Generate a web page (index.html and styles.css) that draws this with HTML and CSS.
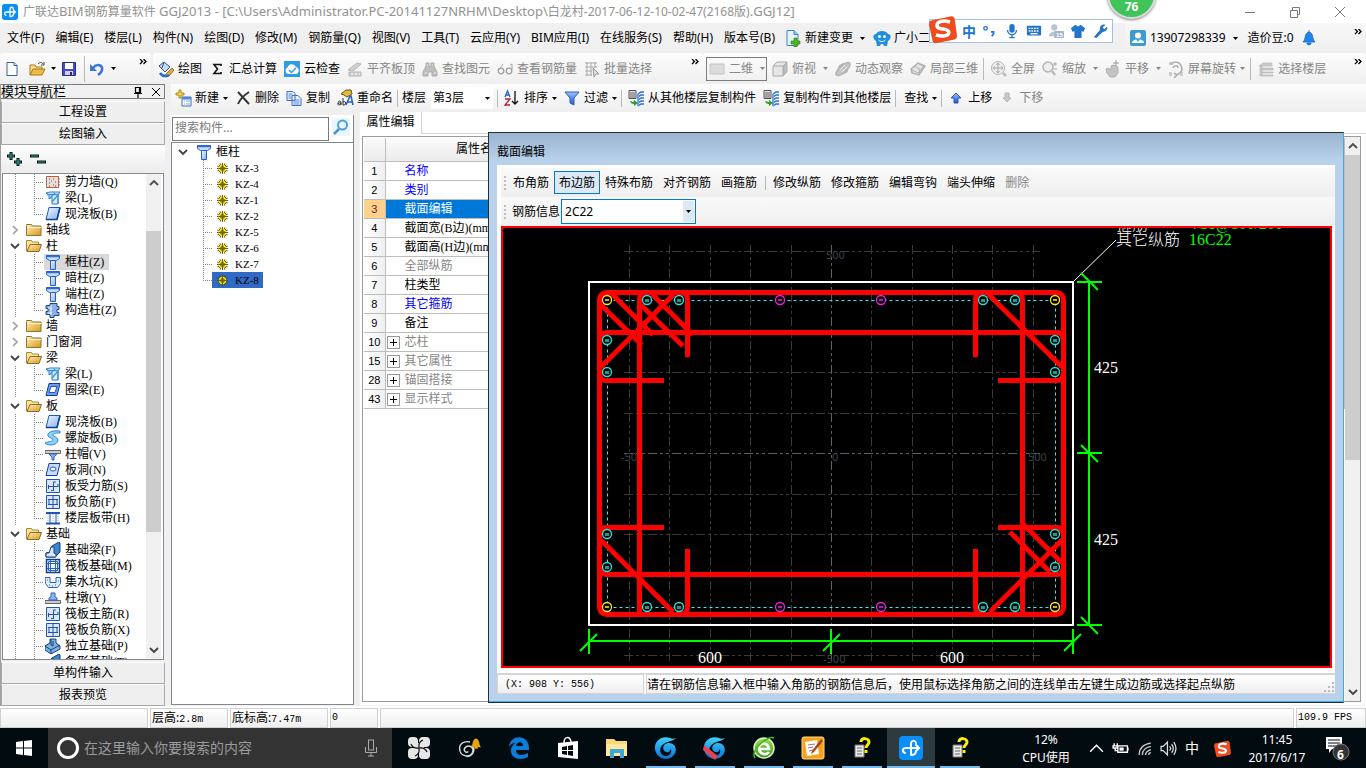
FILE: index.html
```html
<!DOCTYPE html>
<html lang="zh-CN">
<head>
<meta charset="utf-8">
<title>广联达BIM钢筋算量软件 GGJ2013</title>
<link rel="stylesheet" href="styles.css">
</head>
<body>
<svg class="defs" aria-hidden="true">
  <defs>
    <linearGradient id="gBlue" x1="0" y1="0" x2="1" y2="1"><stop offset="0" stop-color="#f4f9ff"/><stop offset="1" stop-color="#7fb2ee"/></linearGradient>
    <linearGradient id="gFold" x1="0" y1="0" x2="1" y2="1"><stop offset="0" stop-color="#fff2b8"/><stop offset="1" stop-color="#d9971c"/></linearGradient>
    <linearGradient id="gArr" x1="0" y1="0" x2="0" y2="1"><stop offset="0" stop-color="#9cc0fb"/><stop offset="1" stop-color="#2455c8"/></linearGradient>
    <linearGradient id="gSky" x1="0" y1="0" x2="0" y2="1"><stop offset="0" stop-color="#3fd0fb"/><stop offset="1" stop-color="#0b72d8"/></linearGradient>
    <linearGradient id="gGreen" x1="0" y1="0" x2="0" y2="1"><stop offset="0" stop-color="#9fe04a"/><stop offset="1" stop-color="#2f9a1c"/></linearGradient>
  </defs>
  <symbol id="app" viewBox="0 0 24 24"><rect width="24" height="24" rx="4" fill="#0a8ffa"/><path d="M12 19V8c0-4 4-4 5-1M20 12H7c-4 0-4 4-1 5M17 9l3 3-3 3M12 19c4 0 5-2 5-4" fill="none" stroke="#fff" stroke-width="2" stroke-linecap="round"/></symbol>
  <symbol id="caret" viewBox="0 0 5 3"><path d="M0 0h5L2.500 3z" fill="currentColor"/></symbol>
  <symbol id="more" viewBox="0 0 8 6"><path d="M1 0l2.500 2.500L1 5M4.500 0 7 2.500 4.500 5" fill="none" stroke="#000" stroke-width="1.300"/></symbol>
  <symbol id="newdoc" viewBox="0 0 18 18"><path d="M4 2.500h7l3 3v10H4z" fill="#fff" stroke="#41618f"/><path d="M11 2.500v3h3" fill="#cfe0f7" stroke="#41618f"/></symbol>
  <symbol id="opend" viewBox="0 0 18 18"><path d="M2 15V5h5l1 2h6v2" fill="#fbe08b" stroke="#a57b1a"/><path d="m2 15 3-6h12l-3 6z" fill="#f0bb45" stroke="#a57b1a"/><path d="M10 4c2-2 4-2 5 0m1-2v3h-3" fill="none" stroke="#444"/></symbol>
  <symbol id="save" viewBox="0 0 18 18"><path d="M2.500 2.500h13v13h-13z" fill="#4a4ac4" stroke="#2a2a8c"/><path d="M5 3h8v6H5z" fill="#fff"/><path d="M5 11h8v4H5z" fill="#cfd2e8"/><path d="M10 12h2v3h-2z" fill="#333"/></symbol>
  <symbol id="undo" viewBox="0 0 18 18"><path d="M5 8c4-5 10-3 9 2-.5 3-3 4-4 5" fill="none" stroke="#3d74d8" stroke-width="2.600"/><path d="M2 4v7h7z" fill="#3d74d8"/></symbol>
  <symbol id="draw" viewBox="0 0 18 18"><path d="m2 6 5-4 6 5-5 5z" fill="#c5dbf5" stroke="#35537c"/><path d="M7 2 5 8" stroke="#35537c"/><path d="m9 14 6-6 2 2-5 6-4 1z" fill="#e5ab35" stroke="#6b4c13" stroke-width=".7"/><path d="M3 13c2 3 5 4 9 2" stroke="#2c6dd2" stroke-width="2.500" fill="none"/></symbol>
  <symbol id="sum" viewBox="0 0 18 18"><path d="M13 6V4.500H6L9.500 9 6 13.500h7V12" fill="none" stroke="#111" stroke-width="1.600"/></symbol>
  <symbol id="cloud" viewBox="0 0 18 18"><path d="M1 1h16v16H1z" fill="#2b9ee6"/><path d="M5 14a3.500 3.500 0 0 1-.5-6.500A4.500 4.500 0 0 1 13 7a3.600 3.600 0 0 1 0 7z" fill="#fff"/><path d="m6 10 2.500 2.500L13 8" stroke="#2b9ee6" stroke-width="1.500" fill="none"/></symbol>
  <symbol id="g-flat" viewBox="0 0 18 18"><path d="m2 10 9-7 4 1-8 7zM3 12h12v4H3z" fill="#d0d0d0" stroke="#b5b5b5"/><path d="M5 14h2m2 0h2m2 0h1" stroke="#fff"/></symbol>
  <symbol id="g-bino" viewBox="0 0 18 18"><path d="M5 3h3v3l1 1 1-1V3h3v3l3 6v4h-5v-4H7v4H2v-4l3-6z" fill="#bdbdbd" stroke="#adadad"/><path d="M4 13h2m7 0h2M6 5h1m4 0h1" stroke="#f4f4f4"/></symbol>
  <symbol id="g-glass" viewBox="0 0 18 18"><path d="M3 10 7 4M16 10V4l-2 1" fill="none" stroke="#aaa"/><circle cx="5" cy="11" r="2.800" fill="none" stroke="#a0a0a0" stroke-width="1.300"/><circle cx="13" cy="11" r="2.800" fill="none" stroke="#a0a0a0" stroke-width="1.300"/></symbol>
  <symbol id="g-batch" viewBox="0 0 18 18"><path d="M2 3h12M2 7h12M2 11h7M2 15h7M4 2v14M8 2v14M12 2v6" stroke="#aaa"/><path d="m10 8 6 6-3 0-2 3z" fill="#ddd" stroke="#999"/></symbol>
  <symbol id="g-plane" viewBox="0 0 18 18"><path d="M2 4h14v10H2z" fill="#dcdcdc" stroke="#c4c4c4"/></symbol>
  <symbol id="g-cube" viewBox="0 0 18 18"><path d="m2 6 4-4h10v10l-4 4H2z" fill="#e6e6e6" stroke="#aaa"/><path d="M12 6v10l4-4V2z" fill="#bbb"/><path d="M2 6h10l4-4M12 6v10" stroke="#aaa" fill="none"/></symbol>
  <symbol id="g-orbit" viewBox="0 0 18 18"><path d="m5 6 5-3 4 4-1 5-5 2-3-3z" fill="#bbb" stroke="#aaa"/><ellipse cx="9" cy="9" rx="9" ry="3.500" transform="rotate(-42 9 9)" fill="#c4c4c4" stroke="#b4b4b4" stroke-width="1.500"/><path d="m6 10 5-5m-3 7 5-5" stroke="#eee"/></symbol>
  <symbol id="g-local" viewBox="0 0 18 18"><path d="m2 9 7-6 7 3-6 9-7-2z" fill="#e5e5e5" stroke="#b0b0b0" stroke-width="1.500"/><path d="m5 6 6 3-1 6M9 3l6 4M3 10l6 3 6-7" stroke="#b0b0b0" fill="none"/></symbol>
  <symbol id="g-full" viewBox="0 0 18 18"><circle cx="8" cy="8" r="6.500" fill="#eee" stroke="#b5b5b5"/><path d="M8 3v10M3 8h10M6.500 5 8 3l1.500 2M6.500 11 8 13l1.500-2M5 6.500 3 8l2 1.500m6-3L13 8l-2 1.500" stroke="#aaa" fill="none"/><path d="m13 13 3 3" stroke="#bbb" stroke-width="2.500"/></symbol>
  <symbol id="g-zoom" viewBox="0 0 18 18"><circle cx="7" cy="7" r="5" fill="#eee" stroke="#b5b5b5" stroke-width="1.500"/><path d="m11 11 3 4" stroke="#bbb" stroke-width="2.500"/><path d="M14 2v4m-2-2h4m-4 5h4" stroke="#aaa"/></symbol>
  <symbol id="g-pan" viewBox="0 0 18 18"><path d="m2 9 2-1 3 2V6l2-1 3 1 2 1v6l-3 4H6l-3-4z" fill="#c4c4c4" stroke="#b0b0b0"/><path d="M12 0v6M9 3h6" stroke="#999"/></symbol>
  <symbol id="g-rot" viewBox="0 0 18 18"><path d="M2 2h4v3H2zM2 12h3v4H2zM13 12h3v4h-3z" fill="#ccc"/><path d="M4 4q5-4 9 0 4 5 0 9l-3 2M7 13l3 2-3 3M6 8c1-3 5-3 5 0" fill="none" stroke="#b0b0b0" stroke-width="1.600"/></symbol>
  <symbol id="g-floor" viewBox="0 0 18 18"><path d="m2 6 4-3h9v3zM5 8h11v2H5zM5 12h11v1H5zM5 15h11v1H5zM3 6h2v10H3z" fill="#cacaca" stroke="#b4b4b4" stroke-width=".6"/></symbol>
  <symbol id="create" viewBox="0 0 18 18"><path d="M5 1h2v3h3v2H7v3H5V6H2V4h3z" fill="#ffe04a" stroke="#987300" stroke-width=".8"/><path d="M8 8h9v9H8z" fill="#fff" stroke="#3e6dbb"/><path d="M8 8h9v2.500H8z" fill="#4f87dc"/><path d="M10 12h1m1 0h4m-6 3h1m1 0h4" stroke="#7da2da"/></symbol>
  <symbol id="del" viewBox="0 0 18 18"><path d="m4 3 11 12M15 3C9 7 6 10 4 15" stroke="#333" stroke-width="1.900" fill="none"/></symbol>
  <symbol id="copy" viewBox="0 0 18 18"><path d="M2 2.500h6l2 2v7H2zM7 6.500h6l3 3v7H7z" fill="#e8f1ff" stroke="#3f6fc2"/><path d="M3.500 5h4m-4 2h3m-3 2h3m2 2h6m-6 2h6m-6 2h6" stroke="#5b8bd8"/></symbol>
  <symbol id="rename" viewBox="0 0 18 18"><path d="m5 5 5-4h5l1 4-5 3-3-2z" fill="#e2b641" stroke="#6d550f"/><path d="M2 15c0-4 3-4 3-1v2m0-2c-3-1-4 2-2 2s2-2 2-2m2-5v7m0-3c4-2 3 4 0 3" fill="none" stroke="#333"/><path d="m10 16 4-9h1l2 9m-5-3h4" stroke="#2a62c9" stroke-width="1.600" fill="none"/></symbol>
  <symbol id="sort" viewBox="0 0 18 18"><path d="m2 8 2.500-6L7 8M3 6h3" stroke="#2b5cb5" stroke-width="1.300" fill="none"/><path d="M2 10h5l-5 6h5" stroke="#a52a2a" stroke-width="1.300" fill="none"/><path d="M12 2v13m-3-3 3 3 3-3" stroke="#111" stroke-width="1.300" fill="none"/></symbol>
  <symbol id="filter" viewBox="0 0 18 18"><path d="M2 3h14l-5 6v7l-4-2V9z" fill="url(#gArr)" stroke="#2b5fc0"/></symbol>
  <symbol id="fcopy" viewBox="0 0 18 18"><path d="M2 1.500h7v8H2z" fill="#ddd" stroke="#555"/><path d="M3 4h5M3 6h5M3 8h5" stroke="#666"/><path d="m11 5 3-2h3M11 8l3-2h3m-6 5 3-2h3m-6 5 3-2h3m-6 5 3-2h3" stroke="#2e6fd0" stroke-width="1.500" fill="none"/><path d="M11 5v12" stroke="#6aa2ec" stroke-width="2"/><path d="M3 12c1 3 3 3 4 3v2l4-3-4-3v2" fill="#2da02d"/></symbol>
  <symbol id="up" viewBox="0 0 18 18"><path d="m9 4 5 5h-3v5H7V9H4z" fill="url(#gArr)" stroke="#2a55b5"/></symbol>
  <symbol id="down" viewBox="0 0 18 18"><path d="m9 13 4-4h-2V4H7v5H5z" fill="#c8c8c8" stroke="#b5b5b5"/></symbol>
  <symbol id="change" viewBox="0 0 18 18"><path d="M3 1.500h7l4 4v11H3z" fill="#e6f4fd" stroke="#3b87bd"/><path d="M10 1.500v4h4" fill="#9dcbe8" stroke="#3b87bd"/><path d="M10 9h3v3h3v3h-3v3h-3v-3H7v-3h3z" fill="#4eb61c" stroke="#2f7d10" stroke-width=".6"/></symbol>
  <symbol id="robot" viewBox="0 0 18 18"><path d="M3 12C-1 9 0 5 3 5 5 1 13 1 15 5c3 0 4 4 0 7l-1 5h-3l-1-2H8l-1 2H4z" fill="#1d8fe0"/><circle cx="6.500" cy="7.500" r="1.500" fill="#fff"/><circle cx="11.500" cy="7.500" r="1.500" fill="#fff"/><path d="M5.500 11c2 2 5 2 7 0" stroke="#fff" fill="none"/></symbol>
  <symbol id="user" viewBox="0 0 18 18"><rect x="1" y="1" width="16" height="16" rx="2" fill="#3e9bd0"/><circle cx="9" cy="6.500" r="3" fill="#fff"/><path d="M3 14c0-5 12-5 12 0z" fill="#fff"/><path d="m7 10 2 3 2-3" fill="#3e9bd0"/></symbol>
  <symbol id="bell" viewBox="0 0 18 18"><path d="M3 13c3-2 1-9 6-10 5 1 3 8 6 10zM9 1v3M7 14h4v1l-2 1-2-1z" fill="#1d84f0" stroke="#1565c0" stroke-width=".8"/></symbol>
  <symbol id="mag" viewBox="0 0 18 18"><path d="M0 0h18v18H0z" fill="#eaf6fe"/><circle cx="10.500" cy="7" r="4.500" fill="#e5f4ff" stroke="#4ea0dc" stroke-width="2"/><path d="m7 11-5 5" stroke="#4c94cd" stroke-width="2.500"/></symbol>
  <symbol id="fold" viewBox="0 0 16 16"><path d="M.5 3.500v-1h5l1 1.500h8.500v9.500H.5z" fill="url(#gFold)" stroke="#8b752f"/><path d="M1 5.500h14" stroke="#fff6cc"/></symbol>
  <symbol id="foldo" viewBox="0 0 16 16"><path d="M.5 13V2.500h5l1 1.500h6v2" fill="#ffe28a" stroke="#a5884c"/><path d="m1 13.500 3-7h11.500l-2.500 7z" fill="url(#gFold)" stroke="#8b6b23"/></symbol>
  <symbol id="i-wall" viewBox="0 0 16 16"><path d="M1.500 2.500h12v11h-12z" fill="#eadfd8" stroke="#8c7b74"/><path d="M1.500 2.500h12M1.500 13.500h12" stroke="#c8592a"/><path d="M4 5h1m3 0h1M6 7h1m3 1h1M4 9h1m3 2h1m-5 1h1m5 0h1" stroke="#555"/><path d="M13 5h2m-2 3h2m-2 3h2" stroke="#c8592a"/></symbol>
  <symbol id="i-beam" viewBox="0 0 16 16"><path d="m1 3 4-1h10l-2 3v9H7V7L4 9V5z" fill="#dceeff" stroke="#2b7cc9"/><path d="M2 4.500h11M5 8l5-5m-3 9 6-7v9" stroke="#3c95dc" fill="none" stroke-width="1.300"/></symbol>
  <symbol id="i-slab" viewBox="0 0 16 16"><path d="M4 1.500h11l-3 12H1z" fill="url(#gBlue)" stroke="#2356bd"/><path d="M1 13.500h11l3-12" fill="none" stroke="#123c9c" stroke-width="1.600"/></symbol>
  <symbol id="i-col" viewBox="0 0 16 16"><path d="M1.500 1.500h13v3l-3 2h-7l-3-2z" fill="#c7deff" stroke="#2b5cc4"/><path d="M2 2.500h12" stroke="#2f6fdb" stroke-width="1.500"/><path d="M5.500 6.500h5v9h-5z" fill="url(#gBlue)" stroke="#2b5cc4"/></symbol>
  <symbol id="i-ccol" viewBox="0 0 16 16"><path d="M5 1.500h7v3h2v3h-2v3h2v3H9v2H5v-3H1v-3h2v-3H1v-3h4z" fill="#8fb0e6" stroke="#1c438e"/><path d="M6 3v10m-3-7h4m-4 5h4" stroke="#e9f1ff"/></symbol>
  <symbol id="i-ring" viewBox="0 0 16 16"><path d="M4 1.500h11l-3 12H1z" fill="#6e9ee8" stroke="#123c9c"/><path d="M6 4.500h6l-2 6H4z" fill="#fff" stroke="#2356bd"/></symbol>
  <symbol id="i-spiral" viewBox="0 0 16 16"><path d="M15 1C6 0 2 3 3 6c1 2 5 2 5 4s-4 1-8 3c3 3 12 3 13-3 0-3-5-3-5-5s4-2 7-2z" fill="#8dd2f7" stroke="#2a8bd0"/></symbol>
  <symbol id="i-cap" viewBox="0 0 16 16"><path d="M0 4.500h15.500v3H0z" fill="#ccc" stroke="#666"/><path d="M4 8h8l-3 3v3H7v-3z" fill="#8eb8f2" stroke="#2a5fc2"/></symbol>
  <symbol id="i-hole" viewBox="0 0 16 16"><path d="M4 1.500h11l-3 12H1z" fill="#c3dcff" stroke="#123c9c"/><ellipse cx="8" cy="7" rx="3" ry="2" fill="#fff" stroke="#2356bd"/></symbol>
  <symbol id="i-reb" viewBox="0 0 16 16"><path d="M1.500 1.500h13v13h-13z" fill="#d9e8fd" stroke="#2452ad"/><path d="M3 8.500h10M8.500 13V4M3.500 7v4M13 6v3M8.500 4H11m-5 8.500h3" stroke="#2452ad" fill="none"/></symbol>
  <symbol id="i-neg" viewBox="0 0 16 16"><path d="M1.500 1.500h13v13h-13z" fill="#d9e8fd" stroke="#2452ad"/><path d="M8 2v12M3 5.500h10M3 10.500h10M4 5v6m8-6v6" stroke="#2452ad" fill="none"/></symbol>
  <symbol id="i-strip" viewBox="0 0 16 16"><path d="M1 3h14M1 13.500h14" stroke="#2452ad" stroke-width="2"/><path d="M5 3v10M11 3v10" stroke="#2452ad"/><path d="M3 4v9m5-9v9m5-9v9" stroke="#8cb4ee" stroke-dasharray="1 1"/></symbol>
  <symbol id="i-fbeam" viewBox="0 0 16 16"><path d="M1 15v-4l4-1 2-6 7-4 1 1v9l-5 5z" fill="#3d86cf" stroke="#123f7d"/><path d="M1 15v-4h3l2-6h3v6l2 1v3z" fill="#d5e9fc" stroke="#123f7d"/></symbol>
  <symbol id="i-raft" viewBox="0 0 16 16"><path d="M1.500 1.500h13v13h-13z" fill="#eaf3ff" stroke="#153f8c" stroke-width="1.500"/><path d="M5.500 2v12m5-12v12M2 5.500h12m-12 5h12M3.500 3.500h9v9h-9z" fill="none" stroke="#2c66bb"/></symbol>
  <symbol id="i-pit" viewBox="0 0 16 16"><path d="M0 3.500h5v5h6v-5h4.500v6l-3 4h-9l-3-4z" fill="#e1f0ff" stroke="#2a5fc2"/><path d="M2 6h1m1 5h1m2 1h1m2-1h1m2-4h1" stroke="#2a5fc2"/></symbol>
  <symbol id="i-pier" viewBox="0 0 16 16"><path d="M0 10.500h15.500v3H0z" fill="#ccc" stroke="#666"/><path d="M4 10V8l2-1V3h4v4l2 1v2z" fill="#8eb8f2" stroke="#2a5fc2"/></symbol>
  <symbol id="i-foot" viewBox="0 0 16 16"><path d="m0 8 5-3V1h6v4l4 3v3l-9 5-6-4z" fill="#81b3e2" stroke="#173f72"/><path d="m0 8 6 4 9-5M6 12v4M6 1v6l2 1V3" fill="none" stroke="#173f72"/></symbol>
  <symbol id="i-gear" viewBox="0 0 14 14"><path d="M7 1v12M1 7h12M3 3l8 8M11 3l-8 8M4.500 1.500l5 11M9.500 1.500l-5 11M1.500 4.500l11 5M12.500 4.500l-11 5" stroke="#4d4500"/><circle cx="7" cy="7" r="4" fill="#f5e300"/><path d="M7 3v8M3 7h8" stroke="#6b6100"/><circle cx="7" cy="7" r="2" fill="none" stroke="#4d4500"/></symbol>
  <symbol id="cdn" viewBox="0 0 12 12"><path d="m2 4 4 4 4-4" fill="none" stroke="#444" stroke-width="1.900"/></symbol>
  <symbol id="crt" viewBox="0 0 12 12"><path d="m4 2 4 4-4 4" fill="none" stroke="#a0a0a0" stroke-width="1.700"/></symbol>
  <symbol id="cup" viewBox="0 0 12 12"><path d="m2 8 4-4 4 4" fill="none" stroke="#505050" stroke-width="1.900"/></symbol>
  <symbol id="swirl" viewBox="0 0 24 24"><path d="M22 2c-2 1-4 1-6 0C8-1 0 5 1 13c1 9 12 13 18 7 5-5 3-13-4-13-6 0-8 7-3 9 3 1 5-1 4-3 3 2 0 7-4 7-5 0-7-5-5-9 3-6 12-5 15-9z" fill="url(#gSky)"/></symbol>
  <symbol id="help" viewBox="0 0 24 24"><path d="M5 9h9v12H5z" fill="#e9e9e9" stroke="#777"/><path d="M7 12h5m-5 3h5m-5 3h5" stroke="#666"/><path d="M11 6c0-5 8-4 8 0 0 3-3 3-3 6m0 2v3" stroke="#ffed00" stroke-width="3" fill="none"/></symbol>
  <symbol id="sogou" viewBox="0 0 24 24"><path d="m1 5 18-4a3 3 0 0 1 3 2l2 15a3 3 0 0 1-2 3L7 24a3 3 0 0 1-4-2L0 8z" fill="#ef4b1c"/><path d="M18 6C11 4 6 6 7 10c1 3 10 1 10 5 0 3-6 4-11 2" fill="none" stroke="#fff" stroke-width="3"/></symbol>
</svg>

<div class="app">
  <header class="titlebar">
    <svg class="i16"><use href="#app"/></svg>
    <h1><span>广联达</span>BIM<span>钢筋算量软件</span> GGJ2013 - [C:\Users\Administrator.PC-20141127NRHM\Desktop\<span>白龙村-2017-06-12-10-02-47(2168版)</span>.GGJ12]</h1>
    <div class="winbtns">
      <button aria-label="最小化"><svg viewBox="0 0 12 12"><path d="M1 6.500h10" stroke="#777" fill="none"/></svg></button>
      <button aria-label="还原"><svg viewBox="0 0 12 12"><path d="M1.500 4.500h7v7h-7zM3.500 4V1.500h7v7H9" stroke="#777" fill="none"/></svg></button>
      <button aria-label="关闭"><svg viewBox="0 0 12 12"><path d="m1 1 10 10M11 1 1 11" stroke="#777" fill="none"/></svg></button>
    </div>
  </header>

  <nav class="menubar">
    <div class="menus">
      <button>文件(F)</button><button>编辑(E)</button><button>楼层(L)</button><button>构件(N)</button><button>绘图(D)</button><button>修改(M)</button><button>钢筋量(Q)</button><button>视图(V)</button><button>工具(T)</button><button>云应用(Y)</button><button>BIM应用(I)</button><button>在线服务(S)</button><button>帮助(H)</button><button>版本号(B)</button>
    </div>
    <button class="tool"><svg><use href="#change"/></svg>新建变更<svg class="caret wide"><use href="#caret"/></svg></button>
    <button class="tool"><svg><use href="#robot"/></svg>广小二</button>
    <div class="account">
      <button class="tool"><svg><use href="#user"/></svg>13907298339<svg class="caret wide"><use href="#caret"/></svg></button>
      <span>造价豆:0</span>
      <svg class="i18"><use href="#bell"/></svg>
      <svg class="more"><use href="#more"/></svg>
    </div>
  </nav>

  <div class="toolbar main">
    <div class="strip files">
      <button class="tool" aria-label="新建"><svg><use href="#newdoc"/></svg></button>
      <button class="tool" aria-label="打开"><svg><use href="#opend"/></svg><svg class="caret"><use href="#caret"/></svg></button>
      <button class="tool" aria-label="保存"><svg><use href="#save"/></svg></button>
      <i class="sep"></i>
      <button class="tool" aria-label="撤销"><svg><use href="#undo"/></svg><svg class="caret"><use href="#caret"/></svg></button>
      <svg class="more"><use href="#more"/></svg>
    </div>
    <div class="strip edit">
      <button class="tool"><svg><use href="#draw"/></svg>绘图</button>
      <button class="tool"><svg><use href="#sum"/></svg>汇总计算</button>
      <button class="tool"><svg><use href="#cloud"/></svg>云检查</button>
      <button class="tool off"><svg><use href="#g-flat"/></svg>平齐板顶</button>
      <button class="tool off"><svg><use href="#g-bino"/></svg>查找图元</button>
      <button class="tool off"><svg><use href="#g-glass"/></svg>查看钢筋量</button>
      <button class="tool off"><svg><use href="#g-batch"/></svg>批量选择</button>
      <svg class="more"><use href="#more"/></svg>
    </div>
    <div class="strip view">
      <button class="tool off boxed"><svg><use href="#g-plane"/></svg>二维<svg class="caret wide"><use href="#caret"/></svg></button>
      <button class="tool off"><svg><use href="#g-cube"/></svg>俯视<svg class="caret wide"><use href="#caret"/></svg></button>
      <button class="tool off"><svg><use href="#g-orbit"/></svg>动态观察</button>
      <button class="tool off"><svg><use href="#g-local"/></svg>局部三维</button>
      <i class="sep"></i>
      <button class="tool off"><svg><use href="#g-full"/></svg>全屏</button>
      <button class="tool off"><svg><use href="#g-zoom"/></svg>缩放<svg class="caret wide"><use href="#caret"/></svg></button>
      <button class="tool off"><svg><use href="#g-pan"/></svg>平移<svg class="caret wide"><use href="#caret"/></svg></button>
      <button class="tool off"><svg><use href="#g-rot"/></svg>屏幕旋转<svg class="caret"><use href="#caret"/></svg></button>
      <i class="sep"></i>
      <button class="tool off"><svg><use href="#g-floor"/></svg>选择楼层</button>
      <svg class="more"><use href="#more"/></svg>
    </div>
  </div>

  <main class="work">
    <aside class="nav">
      <div class="navhead"><h2>模块导航栏</h2>
        <button aria-label="固定"><svg viewBox="0 0 12 12"><path d="M3.500 1.500h5v5h-5zM2 7.500h8M6 7.500V12M7.500 2v5" stroke="#000" fill="none" stroke-width="1.200"/></svg></button>
        <button aria-label="关闭"><svg viewBox="0 0 12 12"><path d="m2 2 8 8M10 2l-8 8" stroke="#000"/></svg></button></div>
      <button class="navbtn">工程设置</button>
      <button class="navbtn">绘图输入</button>
      <div class="expand">
        <button aria-label="全部展开"><svg viewBox="0 0 18 16"><path d="M5 1v8M1 5h8M12 7v8m-4-4h8" stroke="#111" stroke-width="3"/><path d="M5 2v6M2 5h6m4 3v6m-3-3h6" stroke="#16a59a" stroke-width="1.200"/></svg></button>
        <button aria-label="全部折叠"><svg viewBox="0 0 18 16"><path d="M1 5h9m-2 6h9" stroke="#111" stroke-width="3"/><path d="M2 5h7m0 6h7" stroke="#16a59a" stroke-width="1.200"/></svg></button>
      </div>
      <div class="treebox">
        <ul class="tree">
          <li class="leaf"><span><svg><use href="#i-wall"/></svg>剪力墙(Q)</span></li>
          <li class="leaf"><span><svg><use href="#i-beam"/></svg>梁(L)</span></li>
          <li class="leaf end"><span><svg><use href="#i-slab"/></svg>现浇板(B)</span></li>
          <li class="dir"><svg class="chev"><use href="#crt"/></svg><svg><use href="#fold"/></svg>轴线</li>
          <li class="dir"><svg class="chev"><use href="#cdn"/></svg><svg><use href="#foldo"/></svg>柱</li>
          <li class="leaf on"><span><svg><use href="#i-col"/></svg>框柱(Z)</span></li>
          <li class="leaf"><span><svg><use href="#i-col"/></svg>暗柱(Z)</span></li>
          <li class="leaf"><span><svg><use href="#i-col"/></svg>端柱(Z)</span></li>
          <li class="leaf end"><span><svg><use href="#i-ccol"/></svg>构造柱(Z)</span></li>
          <li class="dir"><svg class="chev"><use href="#crt"/></svg><svg><use href="#fold"/></svg>墙</li>
          <li class="dir"><svg class="chev"><use href="#crt"/></svg><svg><use href="#fold"/></svg>门窗洞</li>
          <li class="dir"><svg class="chev"><use href="#cdn"/></svg><svg><use href="#foldo"/></svg>梁</li>
          <li class="leaf"><span><svg><use href="#i-beam"/></svg>梁(L)</span></li>
          <li class="leaf end"><span><svg><use href="#i-ring"/></svg>圈梁(E)</span></li>
          <li class="dir"><svg class="chev"><use href="#cdn"/></svg><svg><use href="#foldo"/></svg>板</li>
          <li class="leaf"><span><svg><use href="#i-slab"/></svg>现浇板(B)</span></li>
          <li class="leaf"><span><svg><use href="#i-spiral"/></svg>螺旋板(B)</span></li>
          <li class="leaf"><span><svg><use href="#i-cap"/></svg>柱帽(V)</span></li>
          <li class="leaf"><span><svg><use href="#i-hole"/></svg>板洞(N)</span></li>
          <li class="leaf"><span><svg><use href="#i-reb"/></svg>板受力筋(S)</span></li>
          <li class="leaf"><span><svg><use href="#i-neg"/></svg>板负筋(F)</span></li>
          <li class="leaf end"><span><svg><use href="#i-strip"/></svg>楼层板带(H)</span></li>
          <li class="dir"><svg class="chev"><use href="#cdn"/></svg><svg><use href="#foldo"/></svg>基础</li>
          <li class="leaf"><span><svg><use href="#i-fbeam"/></svg>基础梁(F)</span></li>
          <li class="leaf"><span><svg><use href="#i-raft"/></svg>筏板基础(M)</span></li>
          <li class="leaf"><span><svg><use href="#i-pit"/></svg>集水坑(K)</span></li>
          <li class="leaf"><span><svg><use href="#i-pier"/></svg>柱墩(Y)</span></li>
          <li class="leaf"><span><svg><use href="#i-reb"/></svg>筏板主筋(R)</span></li>
          <li class="leaf"><span><svg><use href="#i-neg"/></svg>筏板负筋(X)</span></li>
          <li class="leaf"><span><svg><use href="#i-foot"/></svg>独立基础(P)</span></li>
          <li class="leaf"><span><svg><use href="#i-fbeam"/></svg>条形基础(T)</span></li>
        </ul>
        <div class="vbar nbar"><svg><use href="#cup"/></svg><i></i><svg><use href="#cdn"/></svg></div>
      </div>
      <button class="navbtn">单构件输入</button>
      <button class="navbtn">报表预览</button>
    </aside>

    <section class="stage">
      <div class="toolbar comp">
        <button class="tool"><svg><use href="#create"/></svg>新建<svg class="caret"><use href="#caret"/></svg></button>
        <button class="tool"><svg><use href="#del"/></svg>删除</button>
        <button class="tool"><svg><use href="#copy"/></svg>复制</button>
        <button class="tool"><svg><use href="#rename"/></svg>重命名</button>
        <i class="sep"></i>
        <label for="floor">楼层</label>
        <span class="combo floor"><select id="floor"><option>第3层</option></select><svg class="caret"><use href="#caret"/></svg></span>
        <i class="sep"></i>
        <button class="tool"><svg><use href="#sort"/></svg>排序<svg class="caret"><use href="#caret"/></svg></button>
        <button class="tool"><svg><use href="#filter"/></svg>过滤<svg class="caret"><use href="#caret"/></svg></button>
        <i class="sep"></i>
        <button class="tool"><svg><use href="#fcopy"/></svg>从其他楼层复制构件</button>
        <button class="tool"><svg><use href="#fcopy"/></svg>复制构件到其他楼层</button>
        <i class="sep"></i>
        <button class="tool find">查找<svg class="caret"><use href="#caret"/></svg></button>
        <i class="sep"></i>
        <button class="tool"><svg><use href="#up"/></svg>上移</button>
        <button class="tool off"><svg><use href="#down"/></svg>下移</button>
      </div>
      <div class="panes">
        <section class="finder">
          <div class="search"><input type="text" aria-label="搜索构件" placeholder="搜索构件..."><button aria-label="搜索"><svg class="i18"><use href="#mag"/></svg></button></div>
          <ul class="tree ctree">
            <li class="root"><svg class="chev"><use href="#cdn"/></svg><svg><use href="#i-col"/></svg>框柱</li>
            <li class="kz"><span><svg><use href="#i-gear"/></svg>KZ-3</span></li>
            <li class="kz"><span><svg><use href="#i-gear"/></svg>KZ-4</span></li>
            <li class="kz"><span><svg><use href="#i-gear"/></svg>KZ-1</span></li>
            <li class="kz"><span><svg><use href="#i-gear"/></svg>KZ-2</span></li>
            <li class="kz"><span><svg><use href="#i-gear"/></svg>KZ-5</span></li>
            <li class="kz"><span><svg><use href="#i-gear"/></svg>KZ-6</span></li>
            <li class="kz"><span><svg><use href="#i-gear"/></svg>KZ-7</span></li>
            <li class="kz end on"><span><svg><use href="#i-gear"/></svg>KZ-8</span></li>
          </ul>
        </section>
        <section class="props">
          <div class="tabs"><button class="tab">属性编辑</button></div>
          <div class="sheet">
            <div class="grid">
              <table>
                <thead><tr><th class="no"></th><th class="name">属性名称</th><th></th></tr></thead>
                <tbody>
                  <tr class="link"><th>1</th><td>名称</td><td></td></tr>
                  <tr class="link"><th>2</th><td>类别</td><td></td></tr>
                  <tr class="on"><th>3</th><td>截面编辑</td><td></td></tr>
                  <tr><th>4</th><td>截面宽(B边)(mm)</td><td></td></tr>
                  <tr><th>5</th><td>截面高(H边)(mm)</td><td></td></tr>
                  <tr class="dim"><th>6</th><td>全部纵筋</td><td></td></tr>
                  <tr><th>7</th><td>柱类型</td><td></td></tr>
                  <tr class="link"><th>8</th><td>其它箍筋</td><td></td></tr>
                  <tr><th>9</th><td>备注</td><td></td></tr>
                  <tr class="dim grp"><th>10</th><td><button aria-label="展开"></button>芯柱</td><td></td></tr>
                  <tr class="dim grp"><th>15</th><td><button aria-label="展开"></button>其它属性</td><td></td></tr>
                  <tr class="dim grp"><th>28</th><td><button aria-label="展开"></button>锚固搭接</td><td></td></tr>
                  <tr class="dim grp"><th>43</th><td><button aria-label="展开"></button>显示样式</td><td></td></tr>
                </tbody>
              </table>
            </div>
            <div class="vbar pbar"><svg><use href="#cup"/></svg><i></i><svg><use href="#cdn"/></svg></div>
          </div>
        </section>
      </div>
    </section>

    <section class="dialog" role="dialog" aria-labelledby="dlg">
      <h2 id="dlg">截面编辑</h2>
      <div class="dbody">
        <div class="dtools">
          <i class="grip"></i>
          <button>布角筋</button><button class="on">布边筋</button><button>特殊布筋</button><button>对齐钢筋</button><button>画箍筋</button><i class="sep"></i><button>修改纵筋</button><button>修改箍筋</button><button>编辑弯钩</button><button>端头伸缩</button><button class="off">删除</button>
        </div>
        <div class="dtools info">
          <i class="grip"></i>
          <label for="bar">钢筋信息</label>
          <span class="combo bar"><select id="bar"><option>2C22</option></select><svg class="caret"><use href="#caret"/></svg></span>
        </div>
        <svg class="canvas" viewBox="503 228 827 438" preserveAspectRatio="xMinYMin slice">
          <g stroke="#3a3a3a" stroke-dasharray="9 3 3 3 3 3" fill="none">
            <path d="M629.500 245v416M669.500 245v416M710.500 245v416M750.500 245v416M791.500 245v416M871.500 245v416M912.500 245v416M952.500 245v416M992.500 245v416M1033.500 245v416"/>
            <path d="M624 251.500h416M624 292.500h416M624 332.500h416M624 372.500h416M624 413.500h416M624 494.500h416M624 534.500h416M624 574.500h416M624 655.500h416"/>
            <path d="M831.500 245v416M624 453.500h416" stroke="#606060"/>
          </g>
          <g class="axis"><text x="826" y="259">500</text><text x="621" y="461">-500</text><text x="832" y="461">0</text><text x="1028" y="461">500</text><text x="823" y="663">-500</text></g>
          <rect x="589" y="282" width="484" height="343" fill="none" stroke="#fff" stroke-width="2"/>
          <rect x="607.500" y="300.500" width="448" height="307" fill="none" stroke="#29f4f4" stroke-dasharray="3 3"/>
          <g stroke="#f00" stroke-width="5" fill="none">
            <rect x="599.500" y="292.500" width="464" height="322" rx="7"/>
            <path d="M639.500 615V300q0-7 6-7M1022.500 615V300q0-7-6-7M600 340q0-7 6-7.500h451q6 0 6 7M600 567q0 7 6 7.500h451q6 0 6-7"/>
            <path d="M687.500 357v-57q0-7-6-7M664 380.500h-58q-6 0-6-7M975.500 357v-57q0-7 6-7M998 380.500h59q6 0 6-7M664 527.500h-58q-6 0-6 7M687.500 549v58q0 7-6 7M998 527.500h59q6 0 6 7M975.500 549v58q0 7 6 7"/>
            <path d="m601 305 41 40M612 294l41 41M641 305l42 41M652 294l41 41M601 367l73-73M988 294l74 73M601 540l72 72M990 612l72-72M1022 523l40 40M1010 532l40 40"/>
          </g>
          <g stroke-width="1.300" fill="#000">
            <g stroke="#ffee20"><circle cx="607" cy="300" r="4.500"/><circle cx="1055" cy="300" r="4.500"/><circle cx="607" cy="607" r="4.500"/><circle cx="1055" cy="607" r="4.500"/></g>
            <g stroke="#20e8e0"><circle cx="647" cy="300" r="4.500"/><circle cx="679" cy="300" r="4.500"/><circle cx="983" cy="300" r="4.500"/><circle cx="1015" cy="300" r="4.500"/><circle cx="647" cy="607" r="4.500"/><circle cx="679" cy="607" r="4.500"/><circle cx="983" cy="607" r="4.500"/><circle cx="1015" cy="607" r="4.500"/><circle cx="607" cy="340" r="4.500"/><circle cx="607" cy="372" r="4.500"/><circle cx="607" cy="534" r="4.500"/><circle cx="607" cy="567" r="4.500"/><circle cx="1055" cy="340" r="4.500"/><circle cx="1055" cy="372" r="4.500"/><circle cx="1055" cy="534" r="4.500"/><circle cx="1055" cy="567" r="4.500"/></g>
            <g stroke="#f020f0"><circle cx="780" cy="300" r="4.500"/><circle cx="881" cy="300" r="4.500"/><circle cx="780" cy="607" r="4.500"/><circle cx="881" cy="607" r="4.500"/></g>
          </g>
          <path d="M605 299h4v2h-4zM1053 299h4v2h-4zM605 606h4v2h-4zM1053 606h4v2h-4z" fill="#d8b010"/>
          <path d="M645 299h4v3h-4zM677 299h4v3h-4zM981 299h4v3h-4zM1013 299h4v3h-4zM645 606h4v3h-4zM677 606h4v3h-4zM981 606h4v3h-4zM1013 606h4v3h-4zM605 339h4v3h-4zM605 371h4v3h-4zM605 533h4v3h-4zM605 566h4v3h-4zM1053 339h4v3h-4zM1053 371h4v3h-4zM1053 533h4v3h-4zM1053 566h4v3h-4z" fill="#1c9c84"/>
          <path d="M778 299h4v2h-4zM879 299h4v2h-4zM778 606h4v2h-4zM879 606h4v2h-4z" fill="#b02098"/>
          <path d="m1074 281 42-41" stroke="#fff" fill="none"/>
          <g stroke="#0f0" stroke-width="2" fill="none">
            <path d="M1089 282v344M1077 282h25M1077 453h25M1077 625h25M1081 273l17 17M1081 445l17 17M1081 617l17 17M589 641h484M589 629v25M831 629v25M1073 629v25M580 651l17-17M823 651l17-17M1064 651l17-17"/>
          </g>
          <g class="dimtext"><text x="698" y="663">600</text><text x="940" y="663">600</text><text x="1094" y="373">425</text><text x="1094" y="545">425</text><text x="1116" y="230">箍筋</text><text x="1116" y="245">其它纵筋</text></g>
          <g class="dimtext spec"><text x="1189" y="229">4C8@100/200</text><text x="1189" y="245">16C22</text></g>
        </svg>
        <div class="dstatus"><span class="xy mono">(X: 908 Y: 556)</span><span class="tip">请在钢筋信息输入框中输入角筋的钢筋信息后，使用鼠标选择角筋之间的连线单击左键生成边筋或选择起点纵筋</span><svg class="size" viewBox="0 0 12 12"><path d="M9 0h2v2H9zM9 4h2v2H9zM5 4h2v2H5zM9 8h2v2H9zM5 8h2v2H5zM1 8h2v2H1z" fill="#bbb"/></svg></div>
      </div>
    </section>
  </main>

  <footer class="status">
    <span class="c0"></span><span class="c1">层高:<b class="mono">2.8m</b></span><span class="c2">底标高:<b class="mono">7.47m</b></span><span class="c3 mono">0</span><span class="c4"></span><span class="c5 mono">109.9 FPS</span>
  </footer>

  <footer class="taskbar">
    <button class="start" aria-label="开始"><svg viewBox="0 0 16 16"><path d="m0 2 7-1v6.500H0zM8 1l8-1v7.500H8zM0 8.500h7V15l-7-1zM8 8.500h8V16l-8-1z" fill="#fff"/></svg></button>
    <div class="cortana"><i></i><input type="text" aria-label="搜索" placeholder="在这里输入你要搜索的内容"><svg viewBox="0 0 14 18"><rect x="4.500" y="1" width="5" height="10" fill="none" stroke="#aaa"/><path d="M1.500 8v5.500h11V8M7 14v3.500M4 17h6" fill="none" stroke="#aaa"/></svg></div>
    <div class="apps">
      <button aria-label="四叶"><svg viewBox="0 0 24 24"><g fill="#e6e6e6"><rect x="1" y="1" width="10" height="10" rx="4"/><rect x="12" y="1" width="11" height="10" rx="4"/><rect x="1" y="12" width="10" height="11" rx="4"/><rect x="12" y="12" width="11" height="11" rx="4"/><circle cx="12" cy="12" r="5"/></g><path d="M12 12q-6 1-8-4M12 12q-1-6 4-8M12 12q6-1 8 4M12 12q1 6-4 8" stroke="#111" fill="none" stroke-width="1.200"/></svg></button>
      <button aria-label="提醒"><svg viewBox="0 0 28 24"><path d="M14 5C6 3 1 8 2 14c1 8 12 10 15 3 2-6-4-9-8-6s0 8 3 5M16 9c6 6 0 13-6 13" fill="none" stroke="#ddd" stroke-width="1.600"/><path d="M15 11c3-2 1-9 6-10 5 1 3 8 6 10zM19 11h4v2h-4z" fill="#e2a50c"/></svg></button>
      <button aria-label="Edge"><svg viewBox="0 0 24 24"><path d="M2 11C3-2 22-2 22 12v2H9c0 6 7 6 12 3v4c-7 4-17 2-17-6 0-4 2-7 5-8-4 0-6 2-7 4zm7-1h7c0-5-6-5-7 0z" fill="#0a7ddb"/></svg></button>
      <button aria-label="应用商店"><svg viewBox="0 0 24 24"><path d="m2 7 20-2v18L2 21z" fill="#fff"/><path d="M8 7c0-7 6-7 7-1" fill="none" stroke="#fff" stroke-width="1.500"/><path d="M6 11l5-1v4H6zm6-1 5-1v5h-5zm-6 5h5v4l-5-1zm6 0h5v5l-5-1z" fill="#02090d"/></svg></button>
      <button aria-label="文件夹"><svg viewBox="0 0 24 24"><path d="M1 3h8l2 2h11v15H1z" fill="#f8d775"/><path d="M1 8h21v12H1z" fill="#ffe79c"/><path d="M5 22v-9h14v9h-4v-5H9v5z" fill="#39a6dc"/></svg></button>
      <button class="run" aria-label="浏览器"><svg><use href="#swirl"/></svg></button>
      <button class="run" aria-label="游戏浏览器"><svg viewBox="0 0 24 24"><use href="#swirl"/><path d="m1 9 14 11-3 4L0 14z" fill="#e24356"/></svg></button>
      <button class="run" aria-label="360"><svg viewBox="0 0 24 24"><circle cx="12" cy="12" r="10" fill="url(#gGreen)" stroke="#d9f2c0" stroke-width="1.500"/><path d="M17 16c-3 4-10 2-10-4s9-6 10 1H8" fill="none" stroke="#fff" stroke-width="2.600"/><path d="M3 22C-2 14 16-1 22 2" stroke="#46b52a" stroke-width="1.500" fill="none"/></svg></button>
      <button class="run" aria-label="记事"><svg viewBox="0 0 24 24"><rect x="1" y="1" width="22" height="22" rx="2" fill="#f6a31b" stroke="#ffd88a"/><path d="m4 6 12-2 2 14-12 2z" fill="#fff"/><path d="m7 9 7-1m-7 4 5-1m-4 4 4-1" stroke="#a67"/><path d="M20 3 11 15l-1 3 3-2 9-11z" fill="#a2461a"/></svg></button>
      <button class="run" aria-label="帮助"><svg><use href="#help"/></svg></button>
      <button class="run active" aria-label="广联达"><svg><use href="#app"/></svg></button>
      <button class="run" aria-label="帮助"><svg><use href="#help"/></svg></button>
    </div>
    <div class="cpu">12%<br>CPU使用</div>
    <div class="tray">
      <svg viewBox="0 0 16 16"><path d="m2 11 6-6 6 6" fill="none" stroke="#fff" stroke-width="1.400"/></svg>
      <svg viewBox="0 0 16 16"><path d="M5.500 5.500h9v6h-9zM15 7v3M2 3v3M5 3v2M1 5.500h4v2H1zM3 7v3h2" fill="none" stroke="#fff" stroke-width="1.300"/><path d="M7 7h4v3H7z" fill="#fff"/></svg>
      <svg viewBox="0 0 16 16"><path d="M3 14C3 8 7 4 14 3M6 14c0-4 3-7 8-8M9 14c0-3 2-4 5-5M12 14c0-1 1-2 2-2" fill="none" stroke="#ccc" stroke-width="1.200"/></svg>
      <svg viewBox="0 0 16 16"><path d="M1 6h2l4-4v12l-4-4H1zM9 6q2 2 0 4m2-6q3 4 0 8m2-10q4 6 0 12" fill="none" stroke="#ddd" stroke-width="1.200"/></svg>
      <span>中</span>
      <svg class="sg"><use href="#sogou"/></svg>
    </div>
    <div class="clock">11:45<br>2017/6/17</div>
    <button class="note" aria-label="通知"><svg viewBox="0 0 26 26"><path d="M2 2h16v12H8l-3 4v-4H2z" fill="#fff"/><path d="M4 5h12M4 8h12M4 11h8" stroke="#02090d"/><circle cx="17" cy="17" r="8" fill="#333" stroke="#777"/></svg><b>6</b></button>
  </footer>

  <div class="ime">
    <svg class="logo"><use href="#sogou"/></svg>
    <b>中</b>
    <svg viewBox="0 0 18 18"><circle cx="4" cy="6" r="2" fill="none" stroke="#2276c9" stroke-width="1.500"/><path d="M10 10h3v2l-2 3" stroke="#2276c9" stroke-width="2" fill="none"/></svg>
    <svg viewBox="0 0 18 18"><rect x="6" y="1" width="6" height="10" rx="3" fill="#2276c9"/><path d="M4 8c0 7 10 7 10 0M9 13v4M6 16.500h6" stroke="#2276c9" stroke-width="1.500" fill="none"/></svg>
    <svg viewBox="0 0 18 18"><rect x="1" y="3" width="16" height="11" rx="1" fill="#2276c9"/><path d="M3 6h12M3 9h12" stroke="#fff" stroke-dasharray="2 1" stroke-width="1.500"/><path d="M5 12h8" stroke="#fff" stroke-width="1.500"/></svg>
    <svg viewBox="0 0 18 18"><circle cx="7" cy="5" r="3.500" fill="#b9c3d3"/><path d="M1 15c0-7 12-7 12 0z" fill="#b9c3d3"/><rect x="7" y="9" width="11" height="8" rx="1" fill="#a8b5c8"/><text x="9" y="16">15</text></svg>
    <svg viewBox="0 0 18 18"><path d="m6 2 3 2 3-2 5 4-2 4-2-1v8H5V9l-2 1-2-4z" fill="#2276c9"/></svg>
    <svg viewBox="0 0 18 18"><path d="m2 16 7-8C8 4 11 1 15 2l-3 3 2 2 3-3c1 4-2 6-5 6l-7 7z" fill="#2276c9"/></svg>
  </div>
  <div class="ball">76</div>
</div>
</body>
</html>
```
FILE: styles.css
```css
* { box-sizing: border-box; }
body { margin: 0; background: #f0f0f0; color: #000; font: 12px/16px "Noto Sans", "Noto Sans CJK SC", sans-serif; overflow: hidden; }
button { margin: 0; padding: 0; border: 0; background: none; color: inherit; font: inherit; white-space: nowrap; }
input, select { font: inherit; color: inherit; }
h1, h2, ul { margin: 0; padding: 0; font: inherit; list-style: none; }
b { font-weight: normal; }
.defs { position: absolute; width: 0; height: 0; }
svg { flex: none; }
.i16 { width: 16px; height: 16px; }
.i18 { width: 18px; height: 18px; }
.mono { font: 10px/16px "Liberation Mono", monospace; }
.app { position: relative; display: flex; flex-direction: column; height: 100vh; min-height: 560px; overflow: hidden; }

.titlebar { display: flex; align-items: center; height: 23px; flex: none; background: #fff; padding: 0 20px 0 2px; gap: 5px; }
.titlebar h1 { flex: 1; color: #929292; font-size: 13px; white-space: nowrap; overflow: hidden; }
.titlebar h1 span { font-size: 12px; }
.winbtns { display: flex; gap: 33px; }
.winbtns svg { width: 12px; height: 12px; display: block; }

.menubar { display: flex; align-items: center; height: 30px; flex: none; padding-left: 7px; }
.menus { display: flex; gap: 11px; margin-right: 8px; }
.account { display: flex; align-items: center; gap: 6px; align-self: stretch; margin-left: auto; padding: 0 4px 0 3px; background: linear-gradient(#f8f8f8, #efefef); width: 241px; }
.account .more { margin: 0 0 12px auto; }
.tool { display: inline-flex; align-items: center; height: 24px; flex: none; }
.tool svg { width: 18px; height: 18px; margin: 0 3px 0 1px; }
.tool svg.caret { width: 5px; height: 3px; margin: 0 0 0 4px; }
.tool svg.wide { margin: 0 4px 0 7px; }
.menubar > .tool { margin-right: 3px; }
.more { width: 8px; height: 6px; }
.off { color: #868686; }
.sep { width: 1px; height: 22px; background: #b9b9b9; flex: none; margin: 0 2px; }

.toolbar { display: flex; flex: none; }
.main { height: 31px; }
.strip { display: flex; align-items: center; gap: 5px; background: linear-gradient(#fdfdfd, #efefef); border-radius: 3px; }
.strip .more { margin: 0 0 13px auto; }
.files { width: 151px; padding: 0 4px 0 2px; gap: 2px; }
.files .sep { height: 26px; margin: 0; }
.files .tool .caret { margin-left: 2px; }
.files .tool { margin-right: 1px; }
.edit { width: 550px; padding: 0 4px 0 3px; margin-left: 2px; }
.view { flex: 1; padding: 0 4px 0 3px; margin-left: 0; }
.view .tool svg.wide { margin: 0 0 0 7px; }
.view .sep { margin: 0; }
.boxed { border: 1px solid #7d7d7d; margin: 0 -2px 0 -1px; }
.view .boxed { margin-left: -1px; padding-right: 1px; }
.view { padding-left: 3px; }
.edit + .view .boxed { margin-left: 0; }

.work { position: relative; flex: 1; min-height: 0; display: flex; }
.nav { width: 165px; flex: none; display: flex; flex-direction: column; border-left: 1px solid #a0a0a0; }
.navhead { display: flex; align-items: center; gap: 6px; height: 15px; border: 1px solid #7c7c7c; border-left: 0; margin-bottom: 2px; padding-right: 2px; flex: none; }
.navhead h2 { flex: 1; font-size: 13px; line-height: 13px; }
.navhead svg { width: 12px; height: 12px; display: block; }
.navbtn { height: 22px; flex: none; border: 1px solid #a9a9a9; border-top-color: #fff; background: #efefef; }
.expand { display: flex; align-items: center; gap: 5px; padding-left: 5px; height: 27px; flex: none; background: linear-gradient(#fff, #ececec); }
.expand svg { width: 18px; height: 16px; display: block; }
.treebox { flex: 1; min-height: 0; display: flex; border: 1px solid #828790; background: #fff; margin: 1px 1px 2px; padding-right: 2px; }
.tree { flex: 1; overflow: hidden; font-family: "Liberation Serif", "Noto Sans CJK SC", serif; }
.tree li { display: flex; align-items: center; height: 16px; white-space: nowrap; }
.tree li svg { width: 16px; height: 16px; }
.tree li .chev { width: 12px; height: 12px; }
.tree li span { display: flex; align-items: center; }
.leaf::before, .kz::before { content: ""; height: 16px; flex: none;
  --v: repeating-linear-gradient(#888 0 1px, transparent 1px 2px); --h: repeating-linear-gradient(90deg, #888 0 1px, transparent 1px 2px); }
.leaf::before { width: 29px; margin-left: 12px; background: var(--v) 0 0/1px 16px no-repeat, var(--v) 19px 0/1px 16px no-repeat, var(--h) 19px 8px/10px 1px no-repeat; }
.leaf.end::before { background-size: 1px 16px, 1px 8px, 10px 1px; }
.leaf span { gap: 4px; padding: 0 5px 0 1px; }
.leaf.on span { background: #d9d9d9; }
.dir { padding-left: 6px; }
.dir .chev, .root .chev { margin-right: 5px; }
.dir svg + svg { margin-right: 4px; }
.vbar { display: flex; flex-direction: column; align-items: center; background: #f0f0f0; flex: none; }
.vbar svg { width: 12px; height: 12px; margin: 3px 0; }
.vbar i { background: #cdcdcd; width: 100%; }
.vbar svg:last-child { margin-top: auto; }
.nbar { width: 15px; }
.nbar i { height: 62%; margin-top: 39px; }

.stage { flex: 1; min-width: 0; display: flex; flex-direction: column; margin-left: 6px; }
.comp { height: 28px; align-items: center; gap: 5px; background: linear-gradient(#fdfdfd, #efefef); padding-left: 2px; }
.comp .sep { height: 17px; margin: 0 -1px; }
.comp .caret { margin-left: 4px; }
.comp .find { margin-left: 4px; }
.combo { display: flex; align-items: center; background: #fff; }
.combo select { appearance: none; border: 0; background: none; padding: 0 2px; flex: 1; height: 100%; outline: 0; }
.combo .caret { width: 5px; height: 3px; margin: 0 3px; }
.floor { width: 62px; height: 22px; }
.panes { flex: 1; min-height: 0; display: flex; gap: 6px; }
.finder { width: 183px; display: flex; flex-direction: column; margin: 3px 0 1px; background: #fff; border-right: 1px solid #828790; border-bottom: 1px solid #828790; }
.search { display: flex; height: 27px; padding: 2px 0 1px 1px; gap: 3px; flex: none; }
.search input { width: 157px; border: 1px solid #7a7a7a; padding: 0 2px 3px; background: #fff; }
.search input::placeholder { color: #7d7d7d; opacity: 1; }
.ctree { border: 1px solid #828790; border-width: 1px 0 0 1px; padding-top: 1px; }
.root { padding-left: 5px; }
.root svg + svg { margin-right: 4px; margin-left: 2px; }
.kz::before { width: 9px; margin-left: 31px; background: var(--v) 0 0/1px 16px no-repeat, var(--h) 0 8px/9px 1px no-repeat; }
.kz.end::before { background-size: 1px 8px, 9px 1px; }
.kz span { padding: 0 4px; gap: 6px; height: 16px; font-size: 11px; }
.tree .kz svg { width: 13px; height: 13px; }
.kz.on span { background: #316ac5; }

.props { flex: 1; min-width: 0; display: flex; flex-direction: column; background: #fff; margin-bottom: 1px; }
.tabs { display: flex; height: 22px; flex: none; border-bottom: 1px solid #d5d5d5; }
.tab { width: 62px; border-right: 1px solid #d5d5d5; background: #fff; height: 22px; padding-bottom: 2px; }
.sheet { flex: 1; min-height: 0; display: flex; border: 1px solid #9a9a9a; margin: 2px 5px 3px 2px; }
.grid { flex: 1; overflow: hidden; padding: 1px 0 0 1px; }
.pbar { width: 15px; }
.pbar i { height: 54%; }
table { border-collapse: collapse; width: 100%; table-layout: fixed; font-family: "Liberation Serif", "Noto Sans CJK SC", serif; }
th, td { height: 19px; padding: 0; line-height: 16px; border: 1px solid #bdbdbd; border-width: 0 1px 1px 0; text-align: left; font-weight: normal; white-space: nowrap; overflow: hidden; }
th { text-align: center; background: linear-gradient(90deg, #fff, #efefef); font-family: "Liberation Sans", "Noto Sans CJK SC", sans-serif; font-size: 11px; }
thead th { height: 23px; background: linear-gradient(#fbfbfb, #ebebeb); font-size: 12px; }
.no { width: 21px; }
.name { width: 190px; }
td { padding-left: 19px; }
.link td { color: #00f; }
.dim td { color: #868686; }
.on th { background: #ffd18b; color: #702030; }
tr.on td { background: #0078d7; color: #fff; }
.grp td { padding-left: 1px; }
.grp button { width: 13px; height: 13px; border: 1px solid #999; margin-right: 5px; vertical-align: -2px; background: linear-gradient(#000, #000) center/7px 1px no-repeat, linear-gradient(#000, #000) center/1px 7px no-repeat, #fff; }

.dialog { position: absolute; left: 488px; right: 22px; top: 48px; bottom: 3px; display: flex; flex-direction: column; border: 1px solid #23303c; border-right-color: #3baede; background: linear-gradient(#9ab4d0, #b9d1ea 28px); padding: 0 8px 8px; box-shadow: 0 -1px 0 #3baede inset; }
.dialog h2 { height: 32px; padding-top: 11px; flex: none; }
.dbody { flex: 1; min-height: 0; display: flex; flex-direction: column; background: #fff; padding: 3px 0 0; }
.dtools { display: flex; align-items: center; height: 29px; flex: none; background: linear-gradient(#f9f9f9, #efefef); margin-left: 4px; }
.dtools button { height: 23px; padding: 0 5px; }
.dtools .on { background: #dceaf6; border: 1px solid #0078d7; width: 46px; padding: 0; }
.dtools .sep { height: 14px; margin: 0 2px 0 3px; }
.grip { width: 2px; height: 14px; margin: 0 2px 0 3px; background: repeating-linear-gradient(#bdbdbd 0 2px, transparent 2px 4px); }
.info { height: 29px; }
.info .grip { margin-right: 6px; }
.bar { width: 135px; height: 25px; border: 1px solid #0078d7; margin-left: 1px; padding: 1px; }
.bar .caret { box-sizing: content-box; padding: 9px 3px; margin: 0; background: #dbe9f5; }
.canvas { flex: 1; min-height: 0; border: 2px solid #f00; background: #000; margin: 0 3px 5px 4px; width: auto; }
.axis { font-size: 11px; fill: #39404c; }
.dimtext { font: 16px "Liberation Serif", "Noto Sans CJK SC", serif; fill: #fff; font-weight: 300; }
.spec { fill: #0f0; }
.dstatus { display: flex; height: 21px; flex: none; border-top: 1px solid #d5d5d5; background: #fafafa; align-items: stretch; white-space: nowrap; overflow: hidden; }
.dstatus span { border: 1px solid #d5d5d5; background: linear-gradient(#fff, #efefef); line-height: 19px; }
.dstatus .xy { width: 147px; padding-left: 7px; margin-right: 2px; }
.tip { flex: 1; }
.size { width: 12px; height: 12px; align-self: end; margin-left: -13px; }

.status { display: flex; height: 22px; flex: none; gap: 2px; padding-top: 2px; background: #fff; }
.status span { border: 1px solid #d0d0d0; background: linear-gradient(#fff, #efefef); padding-left: 1px; line-height: 18px; white-space: nowrap; }
.c0 { width: 148px; } .c1 { width: 78px; } .c2 { width: 98px; } .c3 { width: 48px; } .c4 { flex: 1; } .c5 { width: 70px; }

.taskbar { display: flex; height: 40px; flex: none; background: #020c10; color: #fff; align-items: stretch; }
.start { width: 48px; }
.start svg { width: 16px; height: 16px; display: block; margin: auto; }
.cortana { width: 344px; background: #333; display: flex; align-items: center; padding: 0 14px 0 9px; gap: 5px; }
.cortana i { width: 22px; height: 22px; border: 3px solid #fff; border-radius: 50%; }
.cortana input { flex: 1; min-width: 0; background: none; border: 0; font-size: 14px; padding: 0; }
.cortana input::placeholder { color: #9b9b9b; opacity: 1; }
.cortana svg { width: 14px; height: 18px; }
.apps { display: flex; gap: 9px; }
.apps button { width: 40px; border-bottom: 2px solid transparent; }
.apps button:first-child { width: 53px; margin-right: -4px; }
.apps svg { width: 24px; height: 24px; display: block; margin: 2px auto 0; }
.apps .run { border-color: #76b9ed; }
.apps .active { width: 48px; margin: 0 -4px; background: #2c3b3f; }
.cpu, .clock { font-size: 12px; line-height: 18px; text-align: center; padding-top: 3px; }
.cpu { margin-left: auto; width: 60px; }
.tray { display: flex; align-items: center; gap: 7px; margin-left: 12px; }
.tray svg { width: 17px; height: 17px; }
.tray span { font-size: 14px; padding: 0 2px 0 1px; }
.tray .sg { margin-left: 6px; }
.clock { width: 70px; margin-left: 11px; }
.note { position: relative; width: 26px; margin: 0 16px 0 12px; }
.note svg { width: 26px; height: 26px; display: block; }
.note b { position: absolute; left: 13px; top: 19px; font-weight: bold; }

.ime { position: absolute; left: 929px; top: 19px; width: 184px; height: 24px; display: flex; align-items: center; gap: 6px; background: #fff; border: 1px solid #a9c0dc; color: #2276c9; }
.ime svg { width: 16px; height: 16px; }
.ime .logo { width: 28px; height: 28px; margin: -4px -1px 0 -1px; }
.ime b { font: bold 14px/20px "Noto Sans CJK SC", sans-serif; }
.ime text { font: bold 7px "Liberation Sans", sans-serif; fill: #fff; }
.ball { position: absolute; left: 1107px; top: -30px; width: 49px; height: 49px; border: 2px solid #ddd; border-radius: 50%; background: #3fc45a; box-shadow: 0 1px 3px #888; color: #fff; font-size: 12px; font-weight: bold; text-align: center; padding-top: 27px; }
```
